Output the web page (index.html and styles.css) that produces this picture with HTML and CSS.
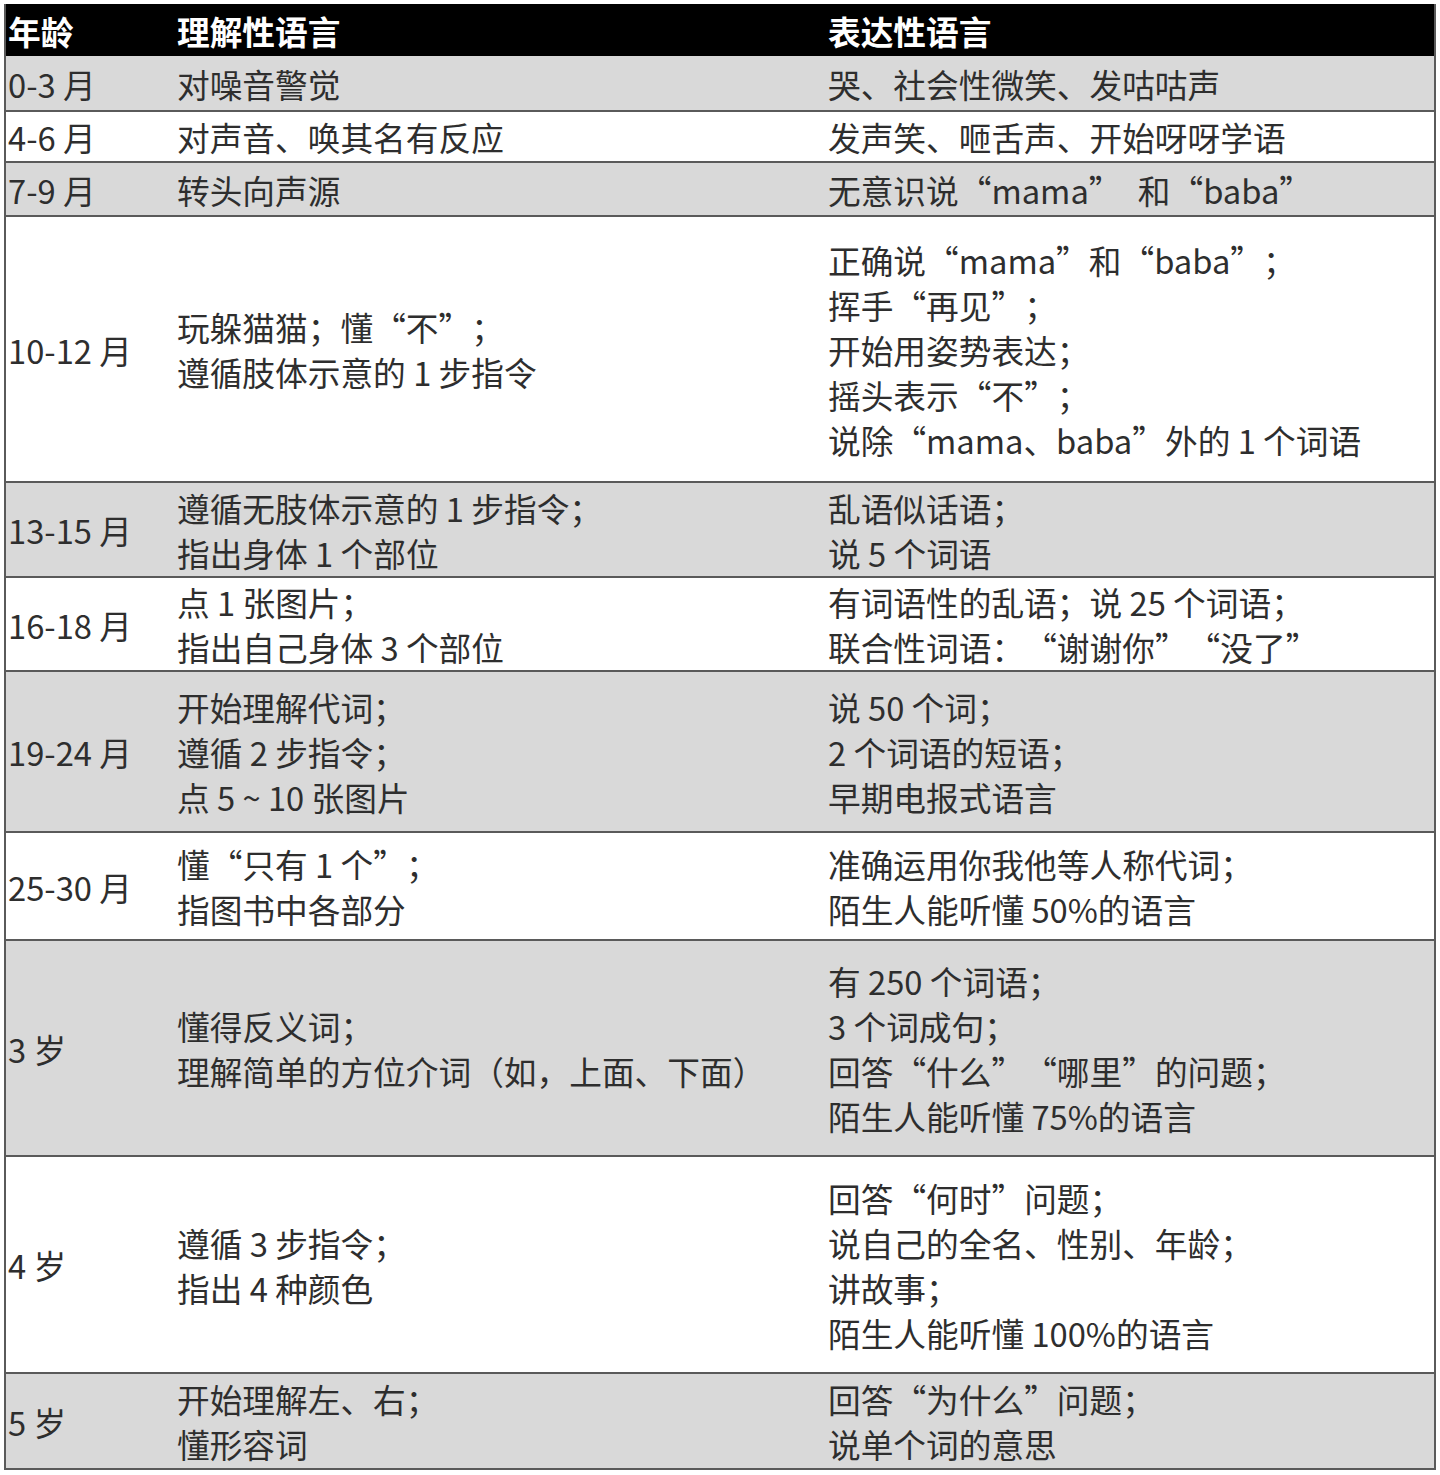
FILE: index.html
```html
<!DOCTYPE html>
<html lang="zh-CN">
<head>
<meta charset="utf-8">
<title>语言发育</title>
<link rel="stylesheet" href="styles.css">
</head>
<body>
<div class="sheet">
  <div class="table">
    <div class="row head h52">
      <div class="c age">年龄</div>
      <div class="c">理解性语言</div>
      <div class="c">表达性语言</div>
    </div>
    <div class="row gray h56">
      <div class="c age">0-3 月</div>
      <div class="c">对噪音警觉</div>
      <div class="c">哭、社会性微笑、发咕咕声</div>
    </div>
    <div class="row h51">
      <div class="c age">4-6 月</div>
      <div class="c">对声音、唤其名有反应</div>
      <div class="c">发声笑、咂舌声、开始呀呀学语</div>
    </div>
    <div class="row gray h54">
      <div class="c age">7-9 月</div>
      <div class="c">转头向声源</div>
      <div class="c">无意识说<span class="q">“</span>mama<span class="q">”</span>&ensp;和<span class="q">“</span>baba<span class="q">”</span></div>
    </div>
    <div class="row h266">
      <div class="c age">10-12 月</div>
      <div class="c">玩躲猫猫；懂<span class="q">“</span>不<span class="q">”</span>；<br>遵循肢体示意的 1 步指令</div>
      <div class="c">正确说<span class="q">“</span>mama<span class="q">”</span>和<span class="q">“</span>baba<span class="q">”</span>；<br>挥手<span class="q">“</span>再见<span class="q">”</span>；<br>开始用姿势表达；<br>摇头表示<span class="q">“</span>不<span class="q">”</span>；<br>说除<span class="q">“</span>mama、baba<span class="q">”</span>外的 1 个词语</div>
    </div>
    <div class="row gray h95">
      <div class="c age">13-15 月</div>
      <div class="c">遵循无肢体示意的 1 步指令；<br>指出身体 1 个部位</div>
      <div class="c">乱语似话语；<br>说 5 个词语</div>
    </div>
    <div class="row h94">
      <div class="c age">16-18 月</div>
      <div class="c">点 1 张图片；<br>指出自己身体 3 个部位</div>
      <div class="c">有词语性的乱语；说 25 个词语；<br>联合性词语：<span class="q">“</span>谢谢你<span class="q">”</span><span class="q">“</span>没了<span class="q">”</span></div>
    </div>
    <div class="row gray h161">
      <div class="c age">19-24 月</div>
      <div class="c">开始理解代词；<br>遵循 2 步指令；<br>点 5 ~ 10 张图片</div>
      <div class="c">说 50 个词；<br>2 个词语的短语；<br>早期电报式语言</div>
    </div>
    <div class="row h108">
      <div class="c age">25-30 月</div>
      <div class="c">懂<span class="q">“</span>只有 1 个<span class="q">”</span>；<br>指图书中各部分</div>
      <div class="c">准确运用你我他等人称代词；<br>陌生人能听懂 50%的语言</div>
    </div>
    <div class="row gray h216">
      <div class="c age">3 岁</div>
      <div class="c">懂得反义词；<br>理解简单的方位介词（如，上面、下面）</div>
      <div class="c">有 250 个词语；<br>3 个词成句；<br>回答<span class="q">“</span>什么<span class="q">”</span><span class="q">“</span>哪里<span class="q">”</span>的问题；<br>陌生人能听懂 75%的语言</div>
    </div>
    <div class="row h217">
      <div class="c age">4 岁</div>
      <div class="c">遵循 3 步指令；<br>指出 4 种颜色</div>
      <div class="c">回答<span class="q">“</span>何时<span class="q">”</span>问题；<br>说自己的全名、性别、年龄；<br>讲故事；<br>陌生人能听懂 100%的语言</div>
    </div>
    <div class="row gray h96 last">
      <div class="c age">5 岁</div>
      <div class="c">开始理解左、右；<br>懂形容词</div>
      <div class="c">回答<span class="q">“</span>为什么<span class="q">”</span>问题；<br>说单个词的意思</div>
    </div>
  </div>
</div>
</body>
</html>
```

FILE: styles.css
```css
html, body {
  margin: 0;
  padding: 0;
  background: #ffffff;
}

body {
  font-family: "Noto Sans CJK SC", "Noto Sans", sans-serif;
  color: #2e2e2e;
}

.sheet {
  padding: 4px 4px 0 4px;
  width: 1440px;
  box-sizing: border-box;
}

.table {
  width: 1432px;
  border-left: 2px solid #5a5a5a;
  border-right: 2px solid #5a5a5a;
  box-sizing: border-box;
}

.row {
  display: grid;
  grid-template-columns: 165px 651px 1fr;
  align-items: center;
  box-sizing: border-box;
  border-bottom: 2px solid #5a5a5a;
  background: #ffffff;
}

.row.gray {
  background: #d9d9d9;
}

.row.head {
  background: #000000;
  color: #ffffff;
  border-bottom: none;
}

.row.head .c {
  font-weight: 700;
}

.c {
  font-size: 32.7px;
  line-height: 45px;
  padding-left: 6px;
  white-space: nowrap;
}

.c.age {
  padding-left: 2px;
}

.q {
  display: inline-block;
  width: 1em;
  text-align: center;
}

.h52 { height: 52px; }
.h56 { height: 56px; }
.h51 { height: 51px; }
.h54 { height: 54px; }
.h266 { height: 266px; }
.h95 { height: 95px; }
.h94 { height: 94px; }
.h161 { height: 161px; }
.h108 { height: 108px; }
.h216 { height: 216px; }
.h217 { height: 217px; }
.h96 { height: 96px; }
```
